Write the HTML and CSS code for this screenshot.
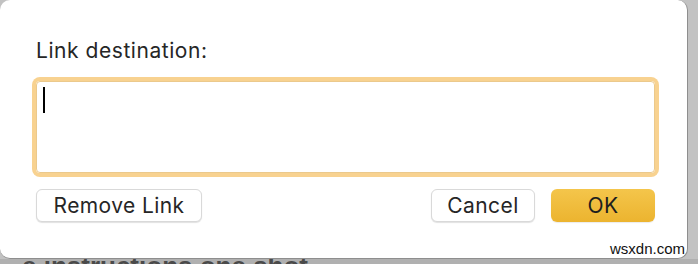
FILE: index.html
```html
<!DOCTYPE html>
<html>
<head>
<meta charset="utf-8">
<link rel="stylesheet" href="styles.css">
</head>
<body>
<div class="dialog">
  <div class="label">Link destination:</div>
  <div class="field"><span class="caret"></span></div>
  <div class="actions">
    <div class="btn remove">Remove Link</div>
    <div class="spacer"></div>
    <div class="btn cancel">Cancel</div>
    <div class="btn ok">OK</div>
  </div>
  <div class="watermark">wsxdn.com</div>
</div>
<div class="backdrop"><span class="behind">e instructions one shot</span></div>
</body>
</html>
```
FILE: styles.css
```css
html, body {
  margin: 0;
  padding: 0;
}
body {
  width: 698px;
  height: 264px;
  overflow: hidden;
  background: #c2c2c2;
  font-family: "Inter", "Liberation Sans", sans-serif;
}
.dialog {
  position: relative;
  width: 688px;
  height: 259px;
  box-sizing: border-box;
  background: #ffffff;
  border-radius: 10px;
  border-right: 1px solid #8e8e8e;
  border-bottom: 1px solid #8e8e8e;
  padding: 38px 32px 0 36px;
}
.label {
  font-size: 21px;
  line-height: 25px;
  letter-spacing: 0.55px;
  color: #262626;
  margin-bottom: 18px;
}
.field {
  height: 92px;
  box-sizing: border-box;
  border: 1px solid #ebc98c;
  border-radius: 4px;
  box-shadow: 0 0 0 4px #f8d290;
  padding: 5px 6px;
}
.caret {
  display: block;
  width: 2px;
  height: 26px;
  background: #000;
}
.actions {
  display: flex;
  margin-top: 16px;
  gap: 16px;
}
.spacer {
  flex: 1;
}
.btn {
  height: 33px;
  box-sizing: border-box;
  border-radius: 6px;
  display: flex;
  align-items: center;
  justify-content: center;
  font-size: 21px;
  letter-spacing: 0.4px;
  color: #262626;
  background: #ffffff;
  border: 1px solid #d9d9d9;
  box-shadow: 0 1px 1px rgba(0, 0, 0, 0.12);
}
.remove {
  width: 166px;
}
.cancel {
  width: 104px;
}
.ok {
  width: 104px;
  border: none;
  background: linear-gradient(#f4c54b, #ecb42f);
  color: #1e1e1e;
  box-shadow: 0 1px 1px rgba(0, 0, 0, 0.08);
}
.watermark {
  position: absolute;
  right: 2px;
  bottom: 1px;
  font-family: "Liberation Sans", sans-serif;
  font-size: 15px;
  color: #111;
}
.backdrop {
  height: 5px;
  overflow: hidden;
  background: #b0b0b0;
  padding-left: 22px;
}
.behind {
  display: block;
  font-family: "Liberation Sans", sans-serif;
  font-weight: bold;
  font-size: 26px;
  line-height: 20px;
  color: #4a4a4a;
  margin-top: -3px;
}
```
